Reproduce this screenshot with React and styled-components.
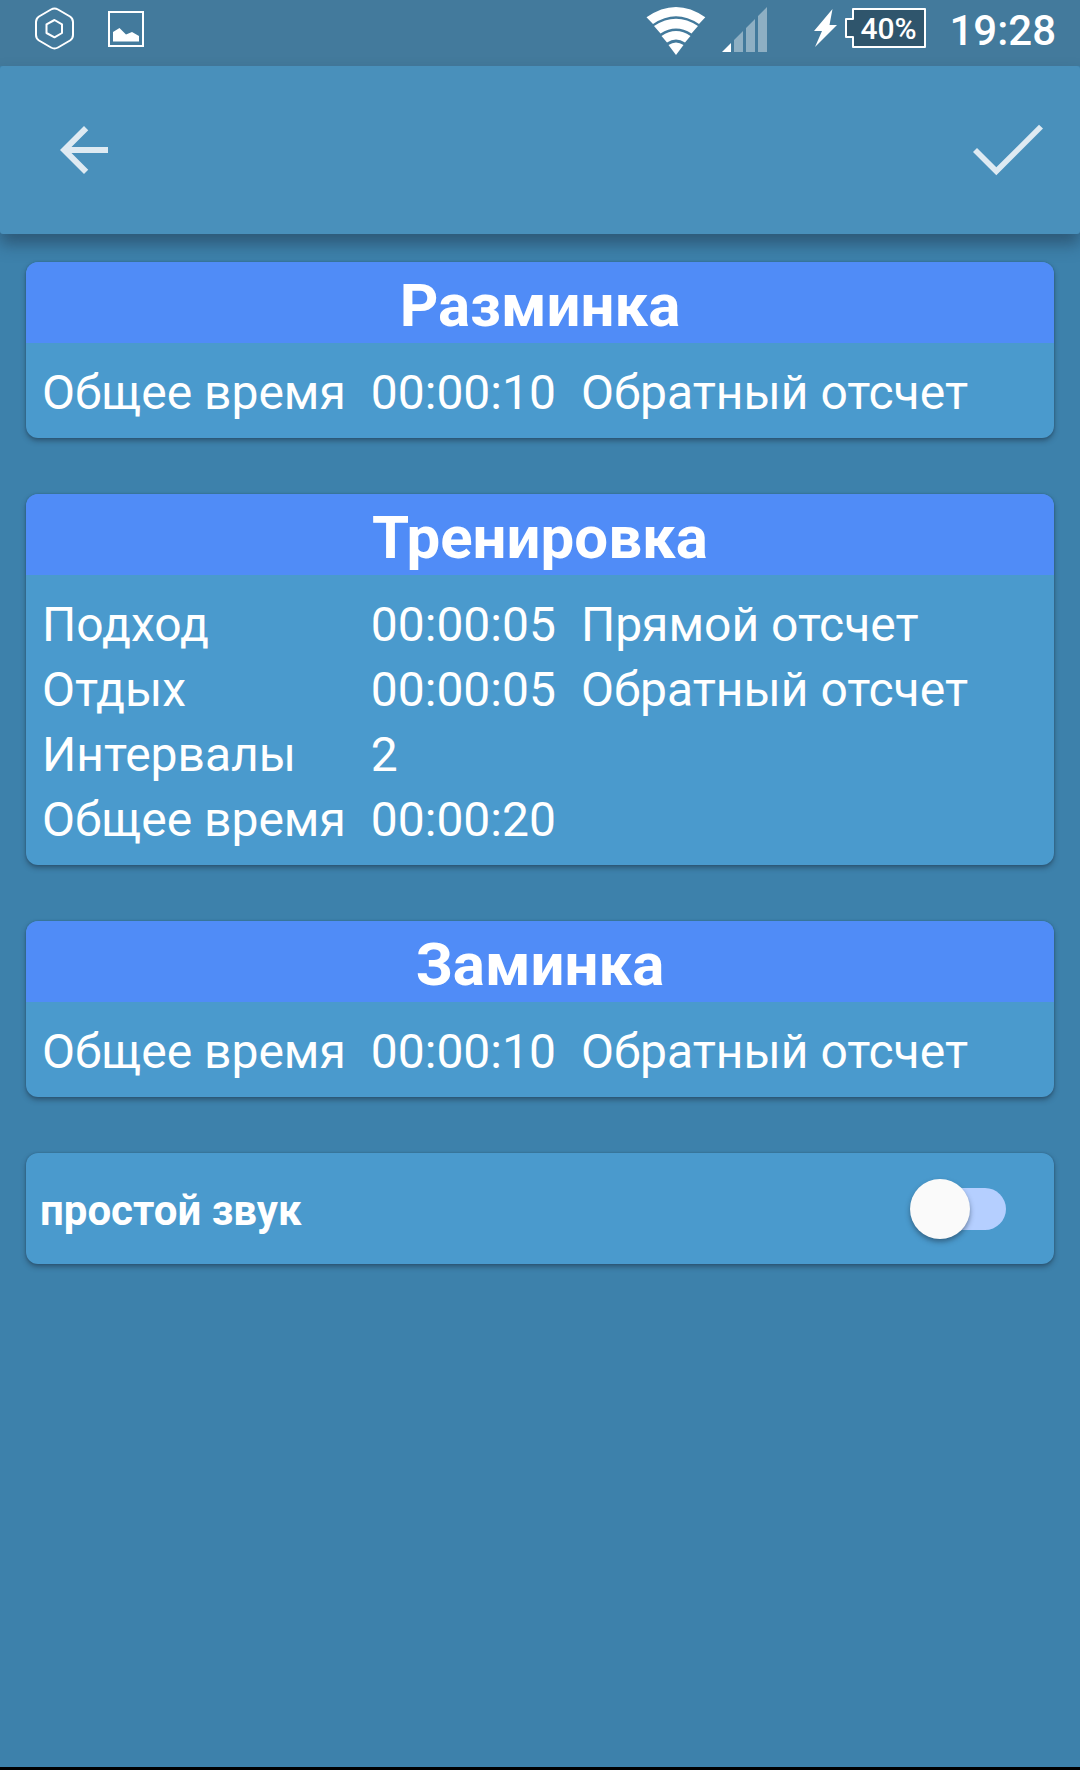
import React, { useState } from 'react';
import styled, { createGlobalStyle } from 'styled-components';

const GlobalStyle = createGlobalStyle`
  * {
    box-sizing: border-box;
  }

  body {
    margin: 0;
    background: #3d81ab;
    color: #fff;
    font-family: Roboto, sans-serif;
  }
`;

const Screen = styled.div`
  display: flex;
  flex-direction: column;
  min-height: 100vh;
  border-bottom: 3px solid #000;
`;

const StatusBar = styled.header`
  display: flex;
  justify-content: space-between;
  height: 66px;
  padding: 0 24px 0 32px;
  background: #437a9c;
`;

const StatusGroup = styled.div`
  display: flex;
  align-items: flex-start;
  gap: ${({ $gap }) => $gap}px;
`;

const StatusIcon = styled.svg`
  display: block;
  height: 58px;
  fill: #fff;
`;

const Battery = styled.div`
  display: grid;

  > * {
    grid-area: 1 / 1;
  }
`;

const BatteryLevel = styled.span`
  padding-left: 15px;
  font-size: 30px;
  font-weight: 500;
  line-height: 58px;
`;

const Clock = styled.time`
  font-size: 42px;
  font-weight: 500;
  line-height: 62px;
`;

const AppBar = styled.nav`
  display: flex;
  align-items: center;
  justify-content: space-between;
  height: 168px;
  padding: 0 36px 0 48px;
  border-radius: 3px;
  background: #4990bb;
  box-shadow: 0 10px 16px rgba(30, 50, 70, 0.5);
`;

const IconButton = styled.button`
  width: 72px;
  height: 72px;
  padding: 0;
  border: 0;
  background: none;
  color: #deeaf2;
  cursor: pointer;

  svg {
    display: block;
    width: 72px;
    height: 72px;
    fill: currentColor;
  }
`;

const Content = styled.main`
  display: flex;
  flex-direction: column;
  gap: 56px;
  padding: 28px 26px;
`;

const Card = styled.section`
  overflow: hidden;
  border-radius: 12px;
  background: #4a9acd;
  box-shadow: 0 3px 5px rgba(30, 50, 70, 0.5), 0 0 2px rgba(30, 50, 70, 0.4);
`;

const CardTitle = styled.h2`
  margin: 0;
  padding-top: 6px;
  background: #508cf7;
  font-size: 60px;
  font-weight: 700;
  line-height: 75px;
  text-align: center;
`;

const CardBody = styled.div`
  padding: 17px 16px 13px;
`;

const Table = styled.table`
  border-collapse: collapse;
  font-size: 48px;
  line-height: 65px;
  white-space: nowrap;

  th,
  td {
    padding: 0 25px 0 0;
    font-weight: 400;
    text-align: left;
  }
`;

const SwitchCard = styled(Card)`
  display: flex;
  align-items: center;
  justify-content: space-between;
  height: 111px;
  padding: 0 48px 0 14px;
`;

const SwitchLabel = styled.label`
  padding-top: 4px;
  font-size: 42px;
  font-weight: 700;
`;

const Switch = styled.input`
  appearance: none;
  position: relative;
  width: 92px;
  height: 42px;
  margin: 0;
  border-radius: 21px;
  background: #b5cfff;
  cursor: pointer;

  &::before {
    content: '';
    position: absolute;
    top: -9px;
    left: -4px;
    width: 60px;
    height: 60px;
    border-radius: 50%;
    background: #fafafa;
    box-shadow: 0 3px 5px rgba(30, 50, 70, 0.5);
  }

  &:checked::before {
    left: 36px;
  }
`;

const sections = [
  {
    title: 'Разминка',
    rows: [['Общее время', '00:00:10', 'Обратный отсчет']],
  },
  {
    title: 'Тренировка',
    rows: [
      ['Подход', '00:00:05', 'Прямой отсчет'],
      ['Отдых', '00:00:05', 'Обратный отсчет'],
      ['Интервалы', '2', ''],
      ['Общее время', '00:00:20', ''],
    ],
  },
  {
    title: 'Заминка',
    rows: [['Общее время', '00:00:10', 'Обратный отсчет']],
  },
];

const HexIcon = () => (
  <StatusIcon width="44" viewBox="32 0 44 58">
    <g fill="none" stroke="#fff" strokeWidth="2" strokeLinejoin="round">
      <path d="M51 9.5Q54.500 7.500 58 9.500L70 16.500Q73 18.500 73 22V35Q73 38.500 70 40.500L58 47.500Q54.500 49.500 51 47.500L39 40.500Q36 38.500 36 35V22Q36 18.500 39 16.500Z" />
      <path d="M54.500 20L62 24.300V33L54.500 37.300L46.500 33V24.300Z" />
    </g>
  </StatusIcon>
);

const ImageIcon = () => (
  <StatusIcon width="38" viewBox="107 0 38 58">
    <path d="M109 12H143V46H109Z" fill="none" stroke="#fff" strokeWidth="2" />
    <path d="M113 41.500V32L119.500 28L126 34.500L132 32L139 36V41.500Z" />
  </StatusIcon>
);

const WifiIcon = () => (
  <StatusIcon width="60" viewBox="646 0 60 58">
    <path d="M646.500 17.300Q676 -3.300 705.300 17.300L699 24Q676 8.500 653 24Z" />
    <path d="M654 26Q676 11.500 698 26L691.500 33.500Q676 23.500 660.500 33.500Z" />
    <path d="M661.500 36Q676 26 690.500 36L685 42.500Q676 36.500 667 42.500Z" />
    <path d="M668.500 45Q676 40 683.500 45L676 55Z" />
  </StatusIcon>
);

const SignalIcon = () => (
  <StatusIcon width="46" viewBox="722 0 46 58">
    <path d="M722 52L731 43V52Z" />
    <path
      d="M734 52V40L743 31V52ZM746 52V28L755 19V52ZM758 52V16L767 7V52Z"
      opacity="0.4"
    />
  </StatusIcon>
);

const BoltIcon = () => (
  <StatusIcon width="24" viewBox="814 0 24 58">
    <path d="M832.500 9L829.500 25H837L815 47L822 31H814Z" />
  </StatusIcon>
);

const BatteryIcon = () => (
  <StatusIcon width="82" viewBox="845 0 82 58">
    <path
      d="M853 9H925V47H853V37H846V19H853Z"
      fill="#2f556c"
      stroke="#fff"
      strokeWidth="2"
      strokeLinejoin="round"
    />
  </StatusIcon>
);

const IntervalCard = ({ title, rows }) => (
  <Card>
    <CardTitle>{title}</CardTitle>
    <CardBody>
      <Table>
        <tbody>
          {rows.map(([label, value, mode]) => (
            <tr key={label}>
              <th scope="row">{label}</th>
              <td>{value}</td>
              <td>{mode}</td>
            </tr>
          ))}
        </tbody>
      </Table>
    </CardBody>
  </Card>
);

const App = () => {
  const [simpleSound, setSimpleSound] = useState(false);

  return (
    <Screen>
      <GlobalStyle />
      <StatusBar>
        <StatusGroup $gap={31}>
          <HexIcon />
          <ImageIcon />
        </StatusGroup>
        <StatusGroup $gap={46}>
          <StatusGroup $gap={16}>
            <WifiIcon />
            <SignalIcon />
          </StatusGroup>
          <StatusGroup $gap={22}>
            <StatusGroup $gap={7}>
              <BoltIcon />
              <Battery>
                <BatteryIcon />
                <BatteryLevel>40%</BatteryLevel>
              </Battery>
            </StatusGroup>
            <Clock>19:28</Clock>
          </StatusGroup>
        </StatusGroup>
      </StatusBar>
      <AppBar>
        <IconButton type="button" aria-label="Назад">
          <svg viewBox="0 0 24 24">
            <path d="M20 11H7.830l5.590-5.590L12 4l-8 8 8 8 1.410-1.410L7.830 13H20v-2z" />
          </svg>
        </IconButton>
        <IconButton type="button" aria-label="Готово">
          <svg viewBox="0 0 72 72">
            <path d="M1 38L5 34L24.300 53.300L67 10.700L71 14.600L24.300 61.300Z" />
          </svg>
        </IconButton>
      </AppBar>
      <Content>
        {sections.map((section) => (
          <IntervalCard key={section.title} {...section} />
        ))}
        <SwitchCard>
          <SwitchLabel htmlFor="simple-sound">простой звук</SwitchLabel>
          <Switch
            id="simple-sound"
            type="checkbox"
            role="switch"
            checked={simpleSound}
            onChange={(e) => setSimpleSound(e.target.checked)}
          />
        </SwitchCard>
      </Content>
    </Screen>
  );
};

export default App;
